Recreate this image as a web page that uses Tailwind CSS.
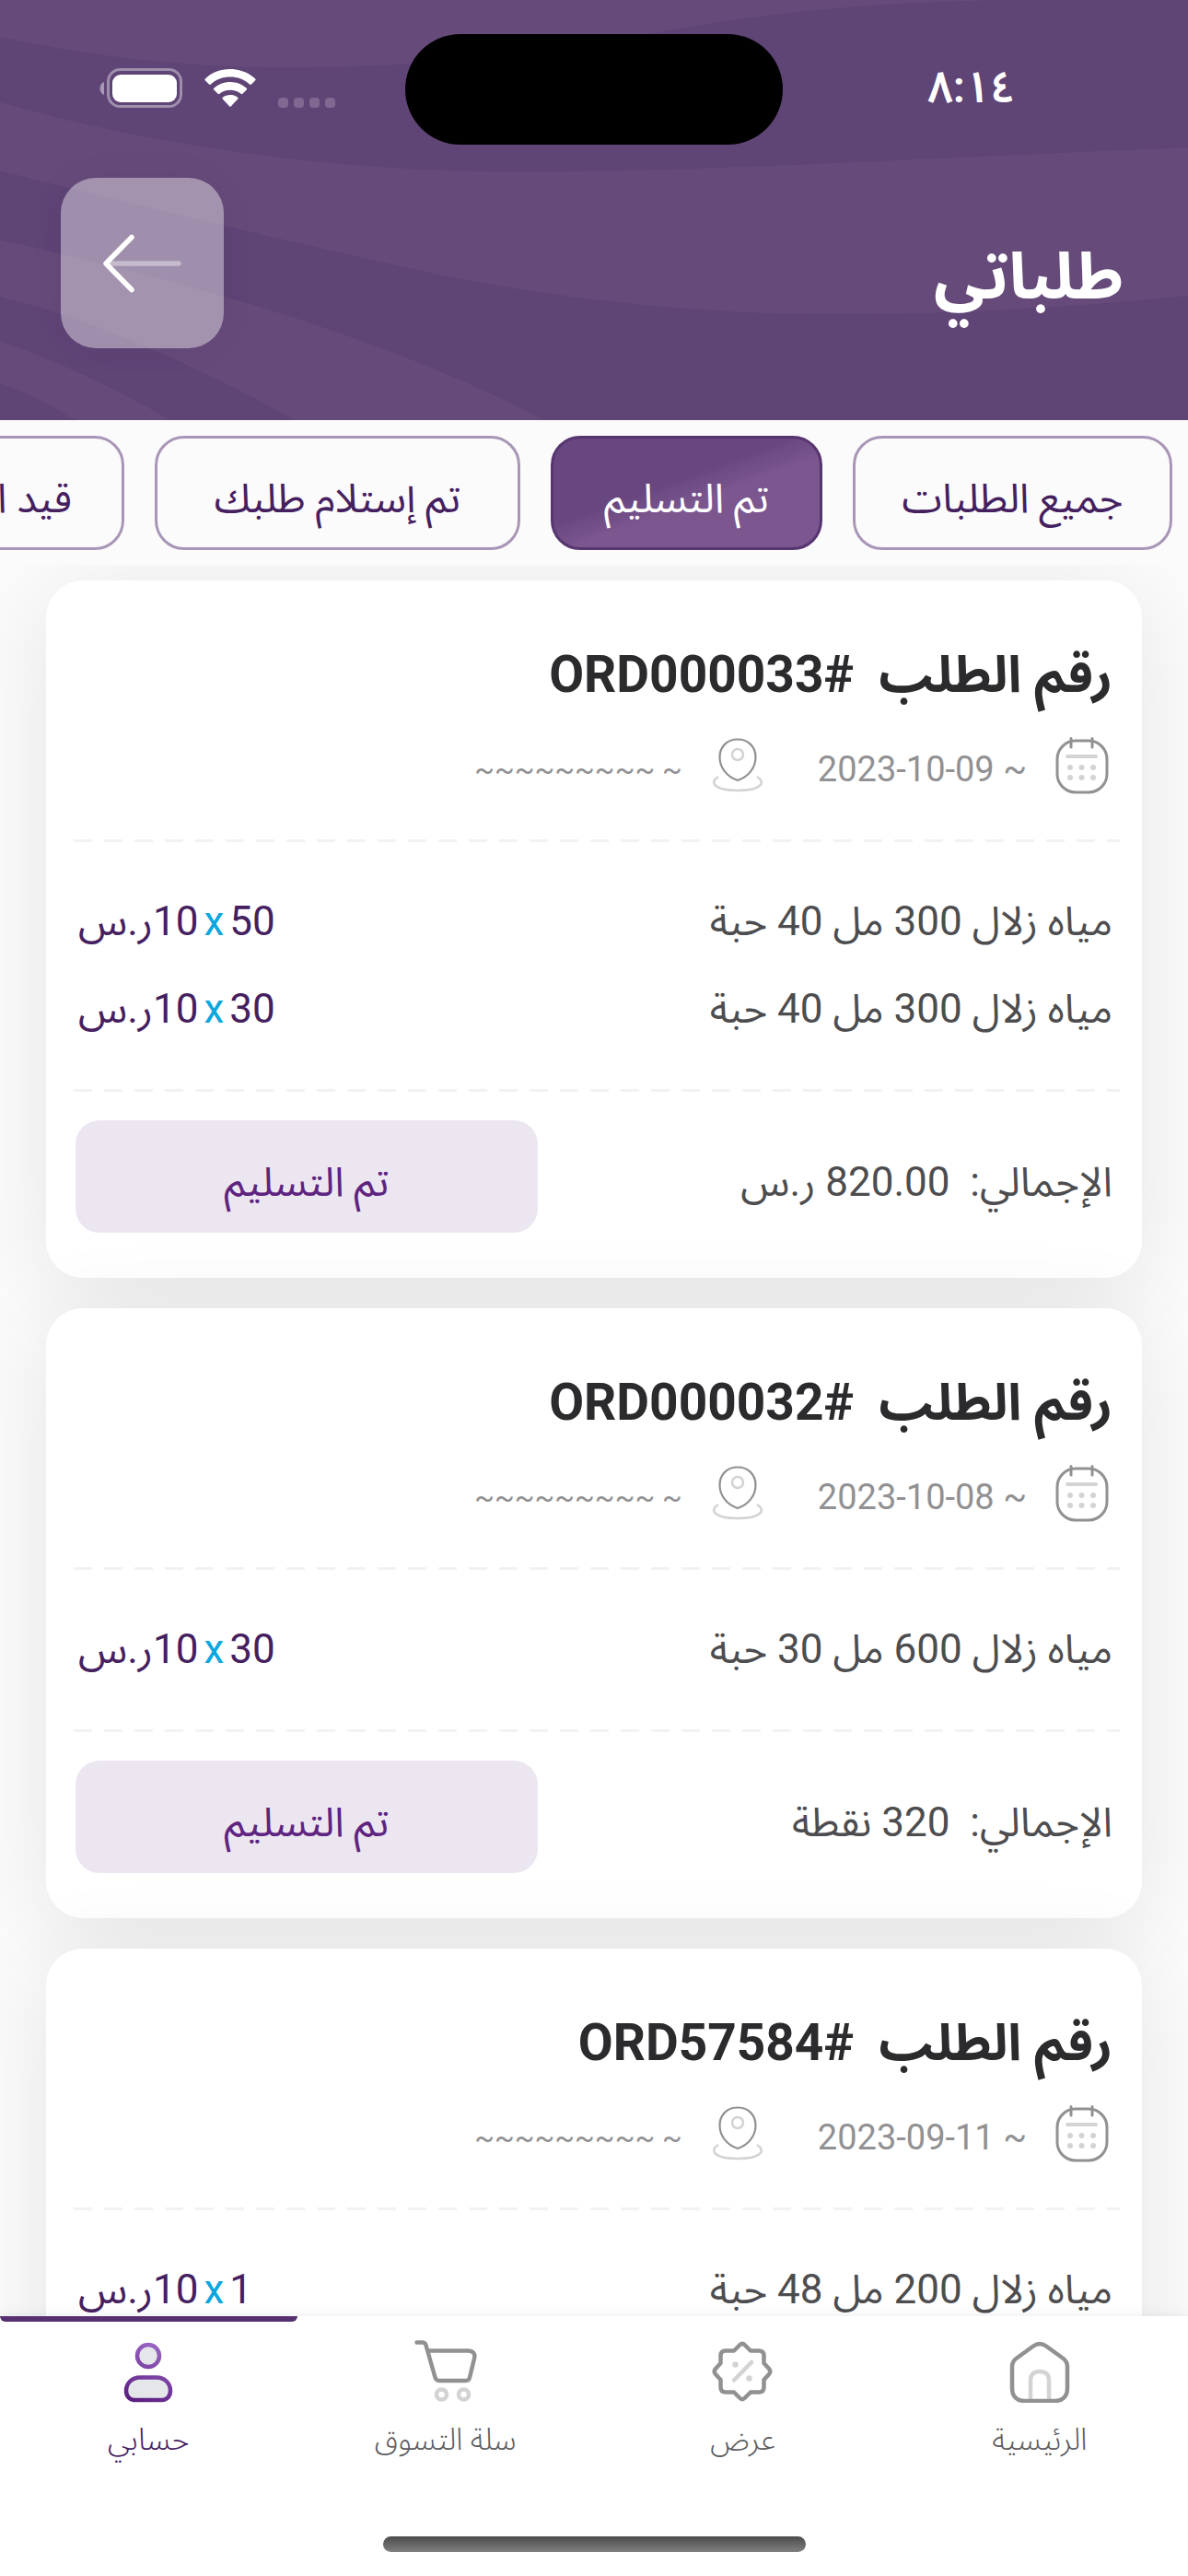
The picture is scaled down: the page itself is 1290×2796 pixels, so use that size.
<!DOCTYPE html>
<html lang="ar" dir="rtl">
<head>
    <meta charset="UTF-8">
    <meta name="viewport" content="width=device-width, initial-scale=1.0">
    <title>طلباتي</title>
    <script src="https://cdn.jsdelivr.net/npm/@tailwindcss/browser@4"></script>
    <style>
        body {
            font-family: Roboto, 'Noto Sans Arabic', 'DejaVu Sans Condensed', sans-serif;
            -webkit-font-smoothing: antialiased;
        }
    </style>
</head>
<body class="bg-[#fbfbfb] text-[#4d4d4f]">
    <!-- Shared icons -->
    <svg class="hidden">
        <symbol id="icon-calendar" viewBox="0 0 58 62">
            <rect x="2" y="4" width="54" height="56" rx="20" fill="none" stroke="#919193" stroke-width="3"/>
            <path d="M17 1.500V11M40 1.500V11" stroke="#919193" stroke-width="3" stroke-linecap="round"/>
            <path d="M13 21H44" stroke="#d3d3d4" stroke-width="4" stroke-linecap="round"/>
            <g fill="#d3d3d4">
                <circle cx="16" cy="33" r="3"/><circle cx="28.500" cy="33" r="3"/><circle cx="41" cy="33" r="3"/>
                <circle cx="16" cy="44" r="3"/><circle cx="28.500" cy="44" r="3"/><circle cx="41" cy="44" r="3"/>
            </g>
        </symbol>
        <symbol id="icon-pin" viewBox="0 0 58 62">
            <path d="M29 2.500C17 2.500 9.500 11 9.500 22C9.500 33 17 43 29 47C41 43 48.500 33 48.500 22C48.500 11 41 2.500 29 2.500Z" fill="none" stroke="#919193" stroke-width="2.200"/>
            <circle cx="29" cy="19" r="6" fill="none" stroke="#d3d3d4" stroke-width="2.500"/>
            <path d="M8 43C-2 49 3 58 29 58C55 58 60 49 50 43" fill="none" stroke="#d3d3d4" stroke-width="2.500"/>
        </symbol>
    </svg>

    <div class="h-screen flex flex-col overflow-hidden">
        <!-- Header -->
        <header class="relative shrink-0 bg-[#5f4476] pt-[37px] pb-[78px] text-white">
            <svg class="absolute inset-0 w-full h-full" viewBox="0 0 1290 455" preserveAspectRatio="none" fill="#664b7a">
                <path d="M0 0V40C110 64 220 74 330 73C460 72 600 58 720 34C840 12 960 2 1090 0Z"/>
                <path d="M0 111C180 162 380 186 560 186C800 186 1050 168 1290 160V320C1150 334 1010 342 870 340C740 338 600 322 480 298C320 264 150 222 0 185Z"/>
                <path d="M0 260C220 308 430 370 590 455H320C230 405 120 352 0 321Z"/>
                <path d="M0 370C70 393 130 424 185 455H82C58 440 30 426 0 415Z"/>
            </svg>

            <div class="relative grid grid-cols-3 items-center h-[120px]">
                <time class="justify-self-center text-[48px] leading-none font-semibold pr-10 pb-1">٨:١٤</time>
                <div class="justify-self-center w-[410px] h-[120px] rounded-full bg-black"></div>
                <div class="justify-self-end flex items-end gap-6 pl-[108px] pb-1">
                    <div class="flex gap-[6px]">
                        <span class="size-[11px] rounded-[4px] bg-white/20"></span>
                        <span class="size-[11px] rounded-[4px] bg-white/20"></span>
                        <span class="size-[11px] rounded-[4px] bg-white/20"></span>
                        <span class="size-[11px] rounded-[4px] bg-white/20"></span>
                    </div>
                    <svg class="w-[56px] h-[43px]" viewBox="0 0 56 43" fill="#fff">
                        <path d="M28 1C17 1 7.500 5 0.800 11.500Q0 12.500 0.800 13.300L5 17.500Q6 18.300 7 17.400C12.500 12 20 9.500 28 9.500S43.500 12 49 17.400Q50 18.300 51 17.500L55.200 13.300Q56 12.500 55.200 11.500C48.500 5 39 1 28 1Z"/>
                        <path d="M28 15C21 15 14.800 17.500 10.300 21.800Q9.500 22.700 10.300 23.500L14.500 27.800Q15.500 28.600 16.500 27.800C19.500 25.200 23.500 23.800 28 23.800S36.500 25.200 39.500 27.800Q40.500 28.600 41.500 27.800L45.700 23.500Q46.500 22.700 45.700 21.800C41.200 17.500 35 15 28 15Z"/>
                        <path d="M28 29C25 29 22 30 19.800 31.800Q19 32.600 19.800 33.500L27 41.200Q28 42.200 29 41.200L36.200 33.500Q37 32.600 36.200 31.800C34 30 31 29 28 29Z"/>
                    </svg>
                    <svg class="w-[90px] h-[43px]" viewBox="0 0 90 43">
                        <path d="M5 15C-1 17 -1 27 5 29Z" fill="#fff" fill-opacity=".45"/>
                        <rect x="9.500" y="1.500" width="79" height="40" rx="13" fill="none" stroke="#fff" stroke-opacity=".4" stroke-width="3"/>
                        <rect x="14" y="7" width="70" height="30" rx="9" fill="#fff"/>
                    </svg>
                </div>
            </div>

            <div class="relative mt-9 flex items-center justify-between pr-[70px] pl-[66px]">
                <h1 class="pt-7 text-[70px] leading-[100px] font-bold">طلباتي</h1>
                <button type="button" aria-label="رجوع" class="w-[177px] h-[185px] rounded-[38px] bg-white/40 shadow-[0_0_30px_rgba(60,30,90,0.1)] flex items-center justify-center">
                    <svg class="w-[86px] h-[64px]" viewBox="0 0 86 64" fill="none" stroke="#fff" stroke-width="5.500" stroke-linecap="round" stroke-linejoin="round">
                        <path d="M8 32H82" stroke-opacity=".4"/>
                        <path d="M31 3.500L3 32L31 60.500"/>
                    </svg>
                </button>
            </div>
        </header>

        <!-- Status filter -->
        <nav class="relative z-10 shrink-0 flex gap-[33px] overflow-hidden bg-[#fbfbfb] pt-[17px] pb-4 pr-[17px] text-[44px] text-[#45205f]">
            <button type="button" class="shrink-0 h-[124px] w-[347px] rounded-[32px] border-[3px] border-[#a896b6] pt-3">جميع الطلبات</button>
            <button type="button" class="shrink-0 h-[124px] w-[295px] rounded-[32px] border-[3px] border-[#57356f] bg-linear-160 from-[#68477f] from-42% to-[#7b568f] to-56% pt-3 text-white">تم التسليم</button>
            <button type="button" class="shrink-0 h-[124px] w-[397px] rounded-[32px] border-[3px] border-[#a896b6] pt-3">تم إستلام طلبك</button>
            <button type="button" class="shrink-0 h-[124px] rounded-[32px] border-[3px] border-[#a896b6] px-[54px] pt-3">قيد التنفيذ</button>
        </nav>

        <!-- Orders -->
        <main class="flex-1 min-h-0 overflow-hidden flex flex-col gap-[33px] px-[50px] pt-[17px]">
            <article class="shrink-0 rounded-[40px] bg-white px-[32px] pt-[60px] pb-[49px] shadow-[0_14px_100px_rgba(0,0,0,0.09)]">
                <h2 class="text-[55px] leading-[84px] font-bold text-[#2b2b2e]">رقم الطلب&nbsp; #ORD000033</h2>
                <div class="mt-[26px] flex items-center h-[62px] px-[4px] text-[38px] text-[#919193]">
                    <svg class="w-[58px] h-[62px] ml-[31px]"><use href="#icon-calendar"/></svg>
                    <span class="ml-[58px] pt-2">~ 2023-10-09</span>
                    <svg class="w-[58px] h-[62px] ml-[31px]"><use href="#icon-pin"/></svg>
                    <span class="pt-2 text-[32px]">~ ~~~~~~~~~</span>
                </div>
                <div class="mt-[49px] -mr-2 -ml-[2px] h-[3px] bg-[repeating-linear-gradient(90deg,#f2f2f2_0_20px,transparent_20px_33px)]"></div>
                <ul class="py-[39px] text-[44px] leading-[95px]">
                    <li class="flex justify-between pl-[3px]">
                        <span>مياه زلال 300 مل 40 حبة</span>
                        <span class="flex gap-[6px] text-[#45205f]"><span>50</span><span class="text-[#0aa6de]">x</span><span dir="ltr">&rlm;10ر.س</span></span>
                    </li>
                    <li class="flex justify-between pl-[3px]">
                        <span>مياه زلال 300 مل 40 حبة</span>
                        <span class="flex gap-[6px] text-[#45205f]"><span>30</span><span class="text-[#0aa6de]">x</span><span dir="ltr">&rlm;10ر.س</span></span>
                    </li>
                </ul>
                <div class="-mr-2 -ml-[2px] h-[3px] bg-[repeating-linear-gradient(90deg,#f2f2f2_0_20px,transparent_20px_33px)]"></div>
                <div class="mt-[31px] flex items-center justify-between text-[44px]">
                    <p class="pt-3">الإجمالي:&nbsp; 820.00 ر.س</p>
                    <button type="button" class="h-[122px] w-[502px] rounded-[26px] bg-[#ece6f1] pt-3 text-[#5e2480]">تم التسليم</button>
                </div>
            </article>

            <article class="shrink-0 rounded-[40px] bg-white px-[32px] pt-[60px] pb-[49px] shadow-[0_14px_100px_rgba(0,0,0,0.09)]">
                <h2 class="text-[55px] leading-[84px] font-bold text-[#2b2b2e]">رقم الطلب&nbsp; #ORD000032</h2>
                <div class="mt-[26px] flex items-center h-[62px] px-[4px] text-[38px] text-[#919193]">
                    <svg class="w-[58px] h-[62px] ml-[31px]"><use href="#icon-calendar"/></svg>
                    <span class="ml-[58px] pt-2">~ 2023-10-08</span>
                    <svg class="w-[58px] h-[62px] ml-[31px]"><use href="#icon-pin"/></svg>
                    <span class="pt-2 text-[32px]">~ ~~~~~~~~~</span>
                </div>
                <div class="mt-[49px] -mr-2 -ml-[2px] h-[3px] bg-[repeating-linear-gradient(90deg,#f2f2f2_0_20px,transparent_20px_33px)]"></div>
                <ul class="py-[39px] text-[44px] leading-[95px]">
                    <li class="flex justify-between pl-[3px]">
                        <span>مياه زلال 600 مل 30 حبة</span>
                        <span class="flex gap-[6px] text-[#45205f]"><span>30</span><span class="text-[#0aa6de]">x</span><span dir="ltr">&rlm;10ر.س</span></span>
                    </li>
                </ul>
                <div class="-mr-2 -ml-[2px] h-[3px] bg-[repeating-linear-gradient(90deg,#f2f2f2_0_20px,transparent_20px_33px)]"></div>
                <div class="mt-[31px] flex items-center justify-between text-[44px]">
                    <p class="pt-3">الإجمالي:&nbsp; 320 نقطة</p>
                    <button type="button" class="h-[122px] w-[502px] rounded-[26px] bg-[#ece6f1] pt-3 text-[#5e2480]">تم التسليم</button>
                </div>
            </article>

            <article class="shrink-0 rounded-[40px] bg-white px-[32px] pt-[60px] pb-[49px] shadow-[0_14px_100px_rgba(0,0,0,0.09)]">
                <h2 class="text-[55px] leading-[84px] font-bold text-[#2b2b2e]">رقم الطلب&nbsp; #ORD57584</h2>
                <div class="mt-[26px] flex items-center h-[62px] px-[4px] text-[38px] text-[#919193]">
                    <svg class="w-[58px] h-[62px] ml-[31px]"><use href="#icon-calendar"/></svg>
                    <span class="ml-[58px] pt-2">~ 2023-09-11</span>
                    <svg class="w-[58px] h-[62px] ml-[31px]"><use href="#icon-pin"/></svg>
                    <span class="pt-2 text-[32px]">~ ~~~~~~~~~</span>
                </div>
                <div class="mt-[49px] -mr-2 -ml-[2px] h-[3px] bg-[repeating-linear-gradient(90deg,#f2f2f2_0_20px,transparent_20px_33px)]"></div>
                <ul class="py-[39px] text-[44px] leading-[95px]">
                    <li class="flex justify-between pl-[3px]">
                        <span>مياه زلال 200 مل 48 حبة</span>
                        <span class="flex gap-[6px] text-[#45205f]"><span>1</span><span class="text-[#0aa6de]">x</span><span dir="ltr">&rlm;10ر.س</span></span>
                    </li>
                </ul>
            </article>
        </main>

        <!-- Bottom navigation -->
        <footer class="relative z-10 shrink-0 bg-white shadow-[0_0_14px_rgba(0,0,0,0.08)]">
            <nav class="grid grid-cols-4 text-[33px] leading-[48px] font-light text-[#5c5c5f]">
                <a href="#" class="flex flex-col items-center gap-4 border-t-[6px] border-transparent pt-5">
                    <svg class="w-[66px] h-[68px]" viewBox="0 0 66 68" fill="none" stroke-width="4.500" stroke-linecap="round" stroke-linejoin="round">
                        <path d="M23 66V43C23 37 27 34 33 34S43 37 43 43V66" stroke="#d3d3d4"/>
                        <path d="M26 6.500L8 19.500C4.500 22 3 25 3 29V52C3 61 8 66 17 66H49C58 66 63 61 63 52V29C63 25 61.500 22 58 19.500L40 6.500Q33 1.500 26 6.500Z" stroke="#919193"/>
                    </svg>
                    الرئيسية
                </a>
                <a href="#" class="flex flex-col items-center gap-4 border-t-[6px] border-transparent pt-5">
                    <svg class="w-[66px] h-[68px]" viewBox="-33 -34 66 68" fill="none" stroke-width="4.500" stroke-linecap="round" stroke-linejoin="round">
                        <path d="M-3 -28.500Q0 -31.500 3 -28.500L9 -22.500H18Q23.500 -22.500 23.500 -17V-9L29 -3Q31.500 0 29 3L23.500 9V17Q23.500 22.500 18 22.500H9L3 28.500Q0 31.500 -3 28.500L-9 22.500H-18Q-23.500 22.500 -23.500 17V9L-29 3Q-31.500 0 -29 -3L-23.500 -9V-17Q-23.500 -22.500 -18 -22.500H-9Z" stroke="#919193"/>
                        <path d="M-9 9.500L10 -10" stroke="#d3d3d4"/>
                        <g fill="#d3d3d4"><circle cx="-7.500" cy="-7.500" r="3.200"/><circle cx="7.500" cy="7.500" r="3.200"/></g>
                    </svg>
                    عرض
                </a>
                <a href="#" class="flex flex-col items-center gap-4 border-t-[6px] border-transparent pt-5">
                    <svg class="w-[68px] h-[68px]" viewBox="0 0 68 68" fill="none" stroke-width="4.500" stroke-linecap="round" stroke-linejoin="round">
                        <path d="M2.500 2.500H9Q11.500 2.500 12.500 5.500L22.500 40.500Q23.500 44 27 44H56Q59 44 60 40.500L65 20Q67 11.500 57.500 11.500H14.500" stroke="#919193"/>
                        <circle cx="29.500" cy="59" r="5.500" stroke="#d3d3d4"/>
                        <circle cx="53.500" cy="59" r="5.500" stroke="#d3d3d4"/>
                    </svg>
                    سلة التسوق
                </a>
                <a href="#" aria-current="page" class="relative flex flex-col items-center gap-4 border-t-[6px] border-transparent pt-5 text-[#45205f]">
                    <span class="absolute -top-[6px] inset-x-0 h-[6px] rounded-b-[6px] bg-[#563070]"></span>
                    <svg class="w-[54px] h-[68px]" viewBox="0 0 54 68" fill="#e5e6e9" stroke="url(#userStroke)" stroke-width="4.500">
                        <defs>
                            <linearGradient id="userStroke" gradientUnits="userSpaceOnUse" x1="40" y1="2" x2="14" y2="68">
                                <stop stop-color="#9c69c8"/><stop offset="1" stop-color="#5b1d80"/>
                            </linearGradient>
                        </defs>
                        <circle cx="27" cy="17" r="12"/>
                        <path d="M18 40.500H36C45 40.500 51 47 51 55C51 61 47 65 42 65H12C7 65 3 61 3 55C3 47 9 40.500 18 40.500Z"/>
                    </svg>
                    حسابي
                </a>
            </nav>
            <div class="mx-auto mt-[81px] mb-[26px] h-[17px] w-[459px] rounded-full bg-linear-to-b from-[#4c4c4c] to-[#808080]"></div>
        </footer>
    </div>
</body>
</html>
